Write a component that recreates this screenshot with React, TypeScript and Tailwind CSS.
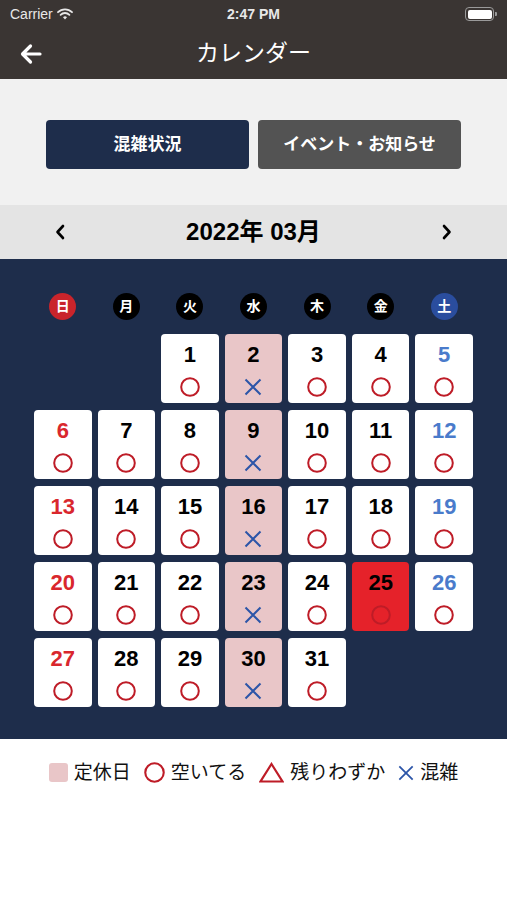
import { ReactNode } from "react";

const FONT = { fontFamily: '"Liberation Sans", "Noto Sans CJK JP", sans-serif' };

type Day = { d: number; col: number };

const WEEKDAYS = [
  { label: "日", bg: "bg-[#c9242b]" },
  { label: "月", bg: "bg-black" },
  { label: "火", bg: "bg-black" },
  { label: "水", bg: "bg-black" },
  { label: "木", bg: "bg-black" },
  { label: "金", bg: "bg-black" },
  { label: "土", bg: "bg-[#2a4d9e]" },
];

function Circle({ size = 20 }: { size?: number }) {
  return (
    <svg width={size} height={size} viewBox="0 0 20 20">
      <circle cx="10" cy="10" r="8.8" fill="none" stroke="#be1c27" strokeWidth="2" />
    </svg>
  );
}

function Cross({ size = 18 }: { size?: number }) {
  return (
    <svg width={size} height={size} viewBox="0 0 18 18">
      <path d="M1.5 1.5 L16.5 16.5 M16.5 1.5 L1.5 16.5" stroke="#2c55a8" strokeWidth="2" fill="none" />
    </svg>
  );
}

function Triangle() {
  return (
    <svg width="25" height="21" viewBox="0 0 25 21">
      <path d="M12.5 2 L23.5 19.5 L1.5 19.5 Z" stroke="#be1c27" strokeWidth="2.2" fill="none" strokeLinejoin="miter" />
    </svg>
  );
}

function DayCell({ day }: { day: Day }) {
  const closed = day.col === 3;
  const busy = day.d === 25;
  const bg = busy ? "bg-[#e5222a]" : closed ? "bg-[#e9c6c8]" : "bg-white";
  const color =
    day.col === 0 && !busy ? "text-[#d9272d]" : day.col === 6 ? "text-[#4a7bcb]" : "text-black";
  return (
    <div className={`flex h-[69px] flex-col items-center rounded-[4px] pt-[8px] ${bg}`}>
      <span className={`text-[22px] font-bold leading-[26px] ${color}`}>{day.d}</span>
      <div className="mt-[9px] flex h-[20px] items-center justify-center">
        {closed ? <Cross /> : <Circle />}
      </div>
    </div>
  );
}

function LegendItem({ icon, label }: { icon: ReactNode; label: string }) {
  return (
    <div className="flex items-center gap-[6px]">
      {icon}
      <span className="text-[19px] leading-none text-[#111]">{label}</span>
    </div>
  );
}

export default function App() {
  const cells: (Day | null)[] = [null, null];
  for (let d = 1; d <= 31; d++) cells.push({ d, col: (d + 1) % 7 });

  return (
    <div className="flex min-h-[900px] w-[507px] flex-col bg-white" style={FONT}>
      {/* status bar + nav */}
      <div className="bg-[#3a3533]">
        <div className="relative flex h-[28px] items-center px-[10px] text-[14px] text-[#e8e8e8]">
          <div className="flex items-center gap-[4px]">
            <span>Carrier</span>
            <svg width="16" height="12" viewBox="0 0 16 12">
              <path d="M1 4.2 A10 10 0 0 1 15 4.2" stroke="#e8e8e8" strokeWidth="1.8" fill="none" strokeLinecap="round" />
              <path d="M3.6 6.8 A6.3 6.3 0 0 1 12.4 6.8" stroke="#e8e8e8" strokeWidth="1.8" fill="none" strokeLinecap="round" />
              <path d="M6 9.3 L8 11.4 L10 9.3 A2.8 2.8 0 0 0 6 9.3 Z" fill="#e8e8e8" />
            </svg>
          </div>
          <span className="absolute left-1/2 -translate-x-1/2 font-bold">2:47 PM</span>
          <div className="ml-auto flex items-center">
            <div className="flex h-[14px] w-[29px] items-center rounded-[4px] border border-[#9a9a9a] p-[1.5px]">
              <div className="h-full w-full rounded-[2px] bg-white" />
            </div>
            <div className="ml-[1px] h-[4px] w-[2px] rounded-r-[1px] bg-[#9a9a9a]" />
          </div>
        </div>
        <div className="relative flex h-[51px] items-center justify-center">
          <svg className="absolute left-[19px]" width="24" height="22" viewBox="0 0 24 22">
            <path d="M21 11 H4 M11.5 3 L3.5 11 L11.5 19" stroke="white" strokeWidth="3.2" fill="none" strokeLinecap="round" strokeLinejoin="round" />
          </svg>
          <span className="text-[23px] text-white">カレンダー</span>
        </div>
      </div>

      {/* tabs */}
      <div className="flex justify-center gap-[9px] bg-[#f1f1f1] pb-[36px] pt-[41px]">
        <button className="flex h-[49px] w-[203px] items-center justify-center rounded-[4px] bg-[#1e2d4b] text-[17px] font-bold text-white">
          混雑状況
        </button>
        <button className="flex h-[49px] w-[203px] items-center justify-center rounded-[4px] bg-[#535353] text-[17px] font-bold text-white">
          イベント・お知らせ
        </button>
      </div>

      {/* month nav */}
      <div className="flex h-[54px] items-center justify-between bg-[#e4e4e4] px-[54px]">
        <svg width="12" height="16" viewBox="0 0 12 16">
          <path d="M9 2 L3.5 8 L9 14" stroke="black" strokeWidth="2.6" fill="none" strokeLinecap="round" strokeLinejoin="round" />
        </svg>
        <span className="text-[24px] font-bold text-black">2022年 03月</span>
        <svg width="12" height="16" viewBox="0 0 12 16">
          <path d="M3 2 L8.5 8 L3 14" stroke="black" strokeWidth="2.6" fill="none" strokeLinecap="round" strokeLinejoin="round" />
        </svg>
      </div>

      {/* calendar */}
      <div className="bg-[#1e2d4b] px-[34px] pb-[32px] pt-[34px]">
        <div className="grid grid-cols-7 gap-x-[6px]">
          {WEEKDAYS.map((w) => (
            <div key={w.label} className="flex justify-center">
              <div className={`flex h-[27px] w-[27px] items-center justify-center rounded-full text-[14px] font-bold text-white ${w.bg}`}>
                {w.label}
              </div>
            </div>
          ))}
        </div>
        <div className="mt-[14px] grid grid-cols-7 gap-x-[6px] gap-y-[7px]">
          {cells.map((c, i) => (c ? <DayCell key={i} day={c} /> : <div key={i} />))}
        </div>
      </div>

      {/* legend */}
      <div className="flex items-center justify-center gap-[13px] pt-[23px]">
        <LegendItem icon={<div className="h-[19px] w-[19px] rounded-[3px] bg-[#e9c6c8]" />} label="定休日" />
        <LegendItem icon={<Circle size={21} />} label="空いてる" />
        <LegendItem icon={<Triangle />} label="残りわずか" />
        <LegendItem icon={<Cross size={16} />} label="混雑" />
      </div>
    </div>
  );
}
